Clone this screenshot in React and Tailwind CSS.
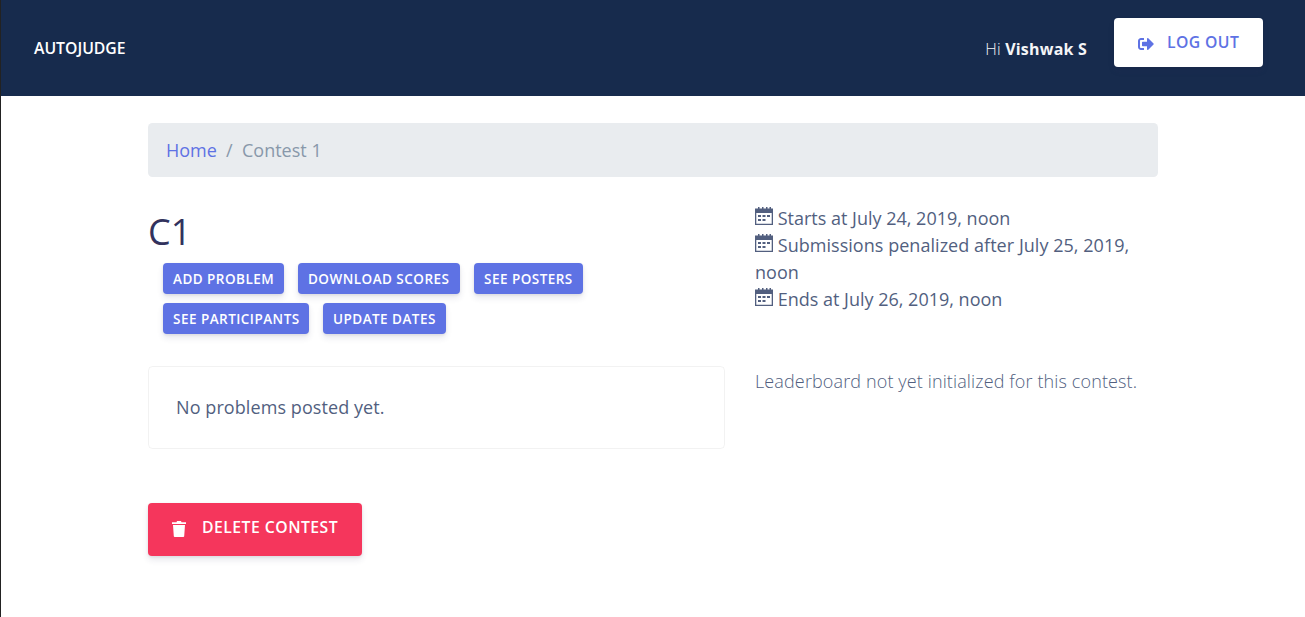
import { FaSignOutAlt } from "react-icons/fa";

function Calendar() {
  return (
    <svg viewBox="0 0 18 18" className="inline-block h-[18px] w-[18px] align-[0px]" fill="currentColor">
      <path fillRule="evenodd" d="M0 1.500h3V0h1.500v1.500H7V0h1.500v1.500H11V0h1.500v1.500h2V0H16v1.500h2V18H0zM1.300 6v10.700h15.400V6z" />
      <path d="M3 8h3v2H3zM7.500 8h3v2h-3zM12 8h3v2h-3zM3 12h3v2H3zM7.500 12h3v2h-3z" />
    </svg>
  );
}

function Trash() {
  return (
    <svg viewBox="0 0 14 16" className="h-4 w-3.5" fill="currentColor">
      <path d="M0 1.200h4.500L5 0h4l.5 1.200H14V3H0zM1 4h12l-.8 11.200a.9.9 0 0 1-.9.800H2.700a.9.9 0 0 1-.9-.800z" />
    </svg>
  );
}

const shadow = "shadow-[0_4px_6px_rgba(50,50,93,0.11),0_1px_3px_rgba(0,0,0,0.08)]";

function SmallButton({ children, width }) {
  return (
    <button className={`h-[31px] ${width} rounded-[4px] bg-[#5e72e4] pl-[10px] text-left whitespace-nowrap text-[13.5px] leading-[20px] font-semibold tracking-[0.47px] text-white ${shadow}`}>
      {children}
    </button>
  );
}

export default function App() {
  return (
    <div className="h-[617px] overflow-hidden border-l border-[#222] bg-white font-['Open_Sans',sans-serif] text-[18px] leading-[27px] text-[#525f7f]">
      <header className="flex h-24 items-start justify-between bg-[#172b4d] pr-[42px] pl-[33px] text-white">
        <span className="pt-[35px] text-[15.75px] leading-[26px] font-semibold">AUTOJUDGE</span>
        <div className="flex items-start">
          <span className="mr-[27px] pt-[36px] text-[16px] leading-[26px] font-light tracking-[0.2px] text-[#f4f5f7]">
            Hi <b className="font-bold">Vishwak S</b>
          </span>
          <button className={`mt-[18px] flex h-[49px] w-[149px] rounded-[4px] bg-white pl-6 text-[15.75px] leading-[24px] font-semibold text-[#5e72e4] ${shadow}`}>
            <FaSignOutAlt className="mt-[18px] h-4 w-4" />
            <span className="mt-[12px] ml-[13px] tracking-[0.4px]">LOG OUT</span>
          </button>
        </div>
      </header>
      <main className="mx-auto w-[1010px] pt-[27px]">
        <nav className="flex h-[54px] items-center rounded-[4.5px] bg-[#e9ecef] px-[18px]">
          <a className="text-[#5e72e4]">Home</a>
          <span className="pr-[9.5px] pl-[9px] text-[#8898aa]">/</span>
          <span className="text-[#8898aa]">Contest 1</span>
        </nav>
        <div className="flex gap-[30px]">
          <section className="w-[577px]">
            <h1 className="mt-[31px] text-[36px] leading-[47px] text-[#32325d]">C1</h1>
            <div className="mt-[8px] ml-[15px] flex flex-wrap gap-x-[14px] gap-y-[9px]">
              <SmallButton width="w-[121px]">ADD PROBLEM</SmallButton>
              <SmallButton width="w-[162px]">DOWNLOAD SCORES</SmallButton>
              <SmallButton width="w-[109px]">SEE POSTERS</SmallButton>
              <SmallButton width="w-[146px]">SEE PARTICIPANTS</SmallButton>
              <SmallButton width="w-[123px]">UPDATE DATES</SmallButton>
            </div>
            <div className="mt-[32px] flex h-[83px] items-center rounded-[4.5px] border border-black/5 px-[27px] tracking-[0.08px]">
              No problems posted yet.
            </div>
            <button className={`mt-[54px] flex h-[53px] w-[214px] rounded-[4px] bg-[#f5365c] pl-6 text-[15.75px] leading-[24px] font-semibold whitespace-nowrap text-white ${shadow}`}>
              <span className="mt-[18px]"><Trash /></span>
              <span className="mt-[12px] ml-[16px] tracking-[0.48px]">DELETE CONTEST</span>
            </button>
          </section>
          <aside className="w-[403px] pt-[28px]">
            <p><Calendar /> Starts at July 24, 2019, noon</p>
            <p className="tracking-[0.04px]"><Calendar /> Submissions penalized after July 25, 2019, noon</p>
            <p><Calendar /> Ends at July 26, 2019, noon</p>
            <p className="mt-[55px] font-light tracking-[0.125px]">Leaderboard not yet initialized for this contest.</p>
          </aside>
        </div>
      </main>
    </div>
  );
}
